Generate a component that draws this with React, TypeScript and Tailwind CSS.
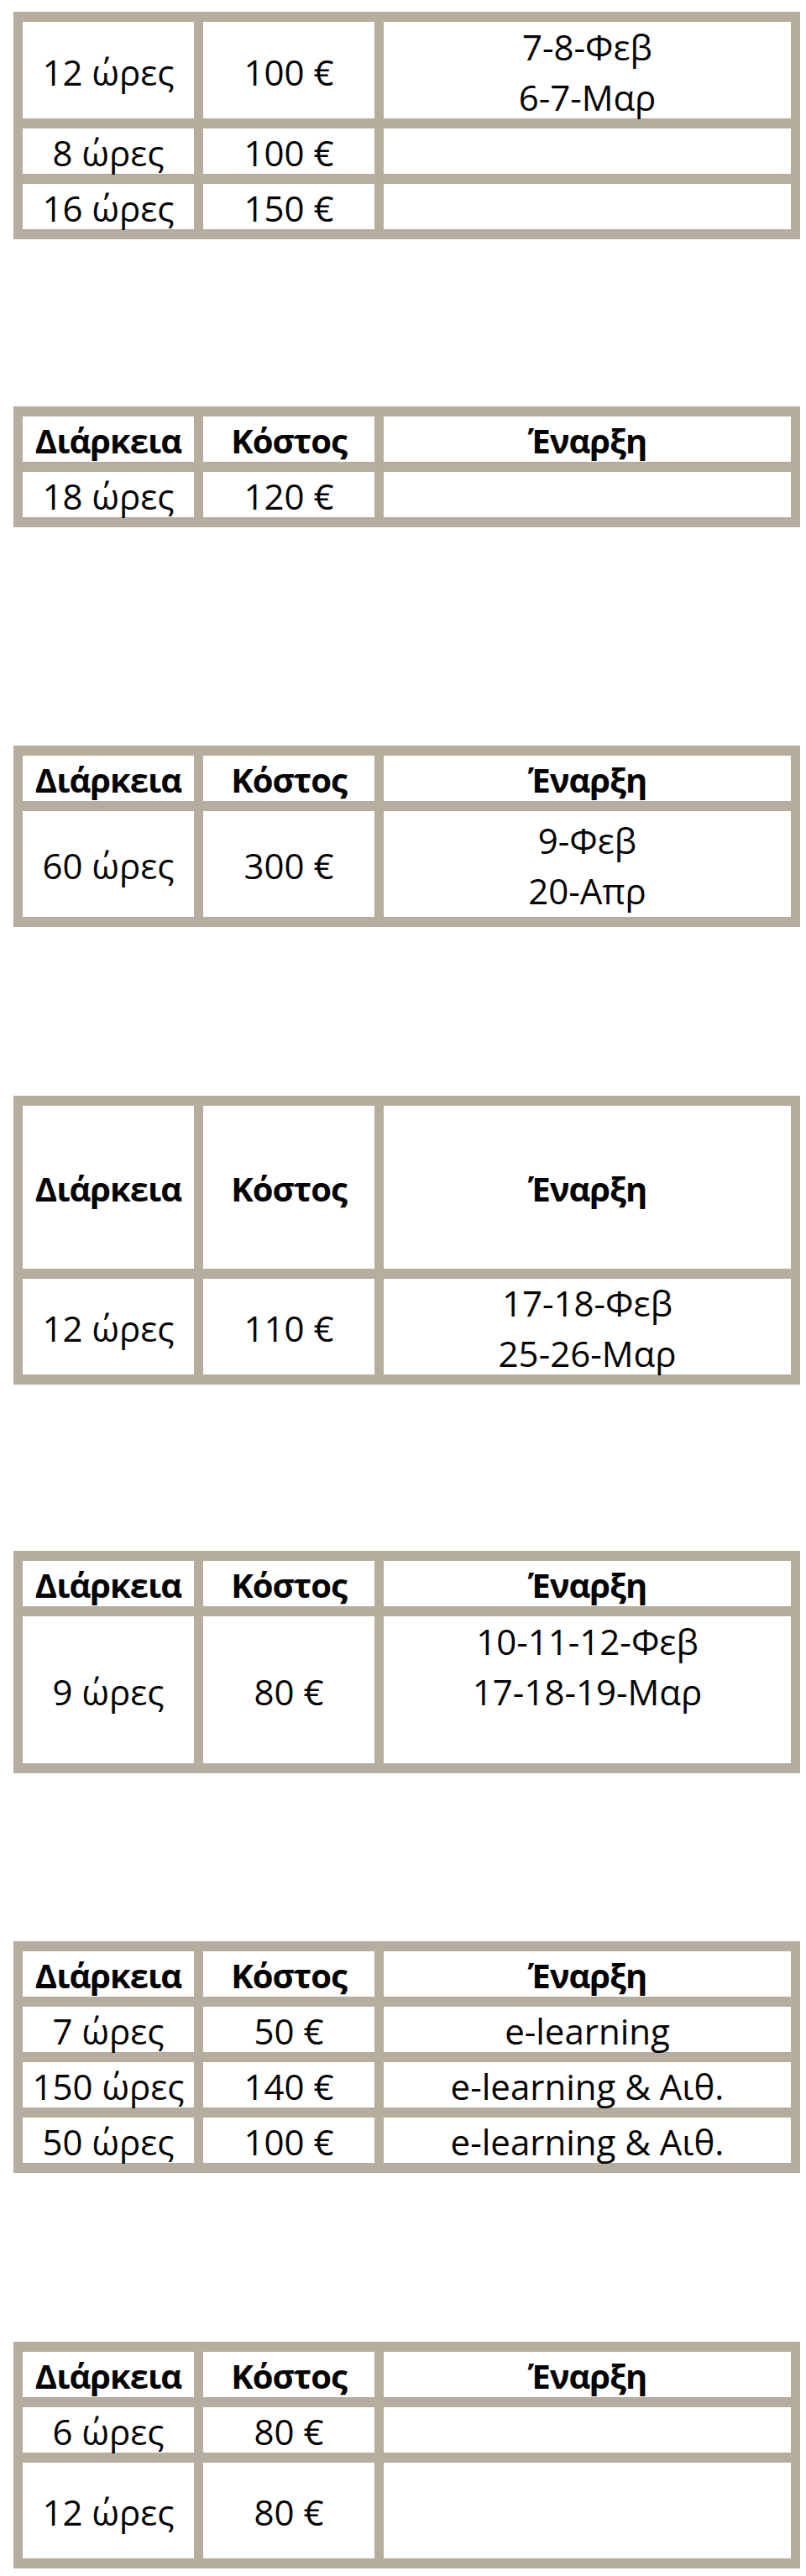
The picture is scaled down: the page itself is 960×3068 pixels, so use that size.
import { ReactNode } from "react"

type Row = {
  h: string
  header?: boolean
  cells: [ReactNode, ReactNode, ReactNode]
}

const head: Row = { h: "h-[54px]", header: true, cells: ["Διάρκεια", "Κόστος", "Έναρξη"] }

function Lines({ items }: { items: string[] }) {
  return (
    <div className="flex flex-col">
      {items.map((t, i) => (
        <span key={i} className="block h-[60px]">
          {t || "\u00a0"}
        </span>
      ))}
    </div>
  )
}

function PriceTable({ rows, className = "" }: { rows: Row[]; className?: string }) {
  return (
    <div
      className={`w-[937px] bg-[#b5ad9d] px-[11px] py-[12px] grid grid-cols-[204px_204px_485px] gap-x-[11px] gap-y-[12px] ${className}`}
    >
      {rows.map((row, ri) =>
        row.cells.map((cell, ci) => (
          <div
            key={`${ri}-${ci}`}
            className={`${row.h} bg-white flex items-center justify-center pt-[4px] text-center leading-[60px] text-[#050505] ${
              row.header ? "text-[40px] font-bold tracking-[-1px]" : "text-[42px] font-medium"
            }`}
          >
            {cell}
          </div>
        ))
      )}
    </div>
  )
}

export default function App() {
  return (
    <div className="min-h-[3068px] bg-white font-['Open_Sans',sans-serif]">
      <div className="pt-[14px] pl-[16px]">
        <PriceTable
          rows={[
            { h: "h-[115px]", cells: ["12 ώρες", "100 €", <Lines items={["7-8-Φεβ", "6-7-Μαρ"]} />] },
            { h: "h-[54px]", cells: ["8 ώρες", "100 €", ""] },
            { h: "h-[54px]", cells: ["16 ώρες", "150 €", ""] },
          ]}
        />

        <PriceTable
          className="mt-[199px]"
          rows={[head, { h: "h-[54px]", cells: ["18 ώρες", "120 €", ""] }]}
        />

        <PriceTable
          className="mt-[260px]"
          rows={[
            head,
            { h: "h-[126px]", cells: ["60 ώρες", "300 €", <Lines items={["9-Φεβ", "20-Απρ"]} />] },
          ]}
        />

        <PriceTable
          className="mt-[201px]"
          rows={[
            { ...head, h: "h-[194px]" },
            { h: "h-[114px]", cells: ["12 ώρες", "110 €", <Lines items={["17-18-Φεβ", "25-26-Μαρ"]} />] },
          ]}
        />

        <PriceTable
          className="mt-[198px]"
          rows={[
            head,
            {
              h: "h-[175px]",
              cells: ["9 ώρες", "80 €", <Lines items={["10-11-12-Φεβ", "17-18-19-Μαρ", ""]} />],
            },
          ]}
        />

        <PriceTable
          className="mt-[200px]"
          rows={[
            head,
            { h: "h-[54px]", cells: ["7 ώρες", "50 €", "e-learning"] },
            { h: "h-[54px]", cells: ["150 ώρες", "140 €", "e-learning & Αιθ."] },
            { h: "h-[54px]", cells: ["50 ώρες", "100 €", "e-learning & Αιθ."] },
          ]}
        />

        <PriceTable
          className="mt-[201px]"
          rows={[
            head,
            { h: "h-[54px]", cells: ["6 ώρες", "80 €", ""] },
            { h: "h-[114px]", cells: ["12 ώρες", "80 €", ""] },
          ]}
        />
      </div>
    </div>
  )
}
